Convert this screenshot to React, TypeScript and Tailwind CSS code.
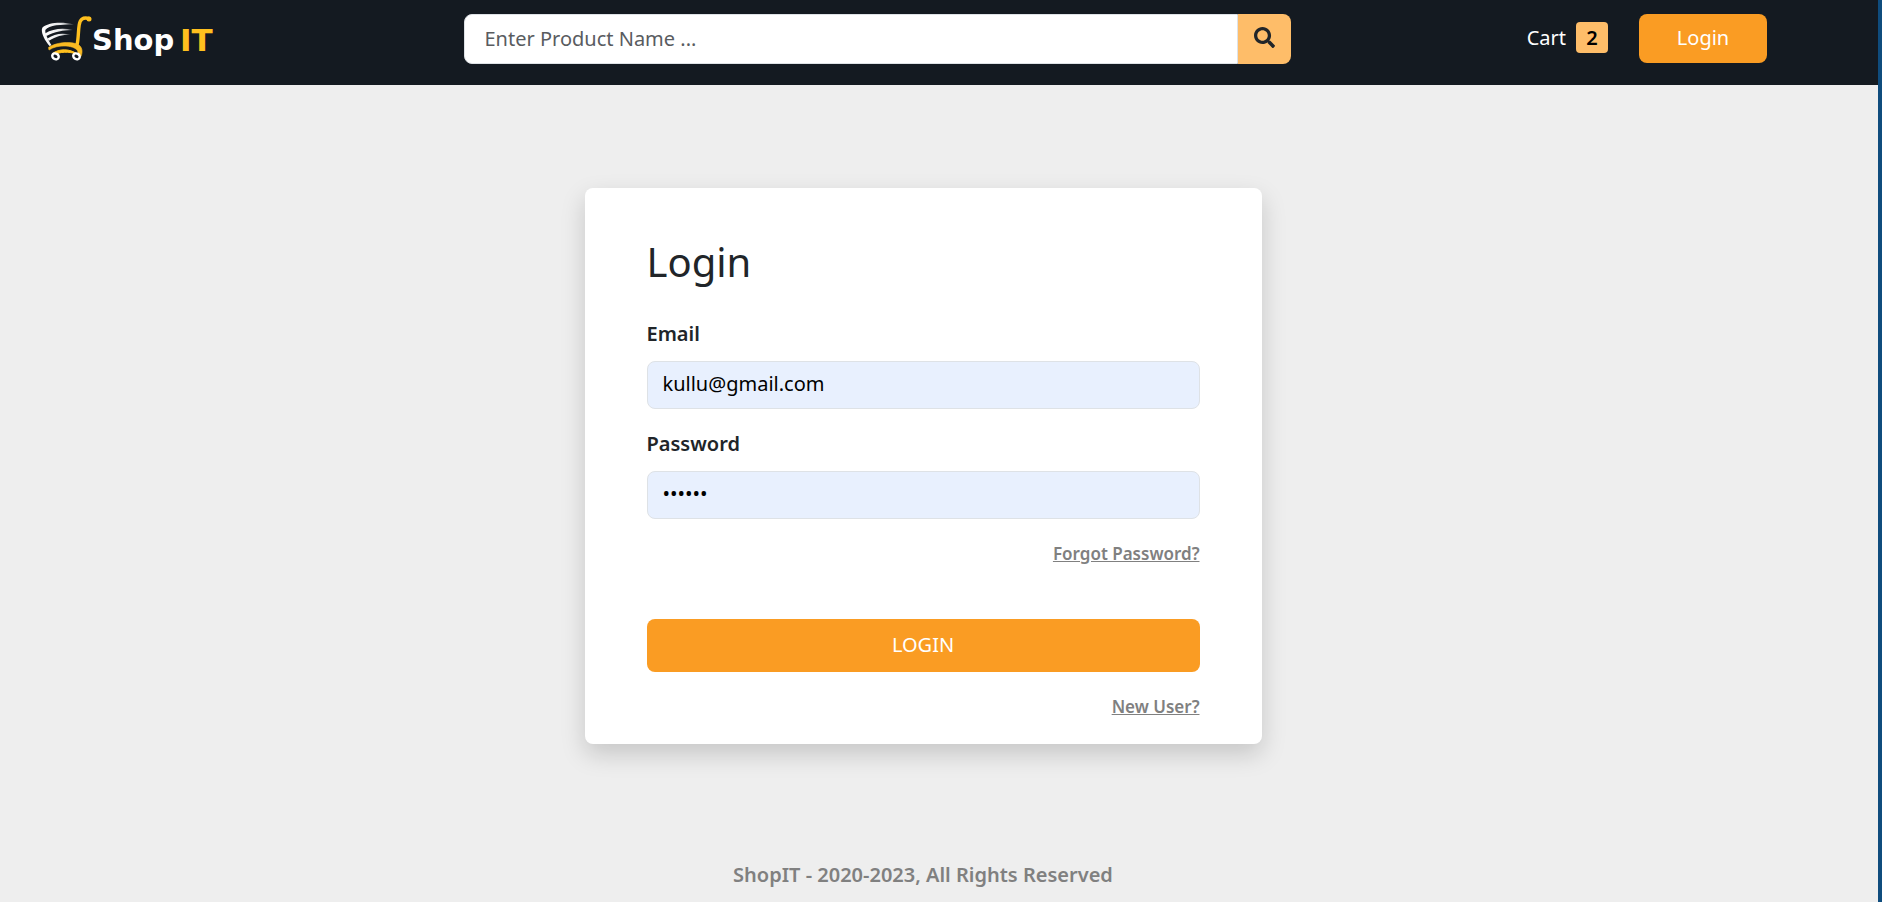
import React from "react";
import { FaSearch } from "react-icons/fa";

function Logo() {
  return (
    <svg viewBox="0 0 176 50" className="h-[50px] w-[176px]" role="img" aria-label="ShopIT">
      <defs>
        <linearGradient id="wire" x1="0" x2="1" y1="0" y2="0">
          <stop offset="0" stopColor="#fff" />
          <stop offset="0.6" stopColor="#e4e6e8" />
          <stop offset="1" stopColor="#fff" stopOpacity="0.25" />
        </linearGradient>
      </defs>
      <path d="M33 10.500C22 7.500 8 8 2 13C-0.800 15.600 1.500 24 8.500 32L10.500 31.300C6 24 3.500 18 4.500 15.800C8 11 20 10.500 33 10.500Z" fill="url(#wire)" />
      <path d="M4 19.500C12 14.800 21 13.700 32 16C22 16.200 13.500 17.500 5.500 22Z" fill="url(#wire)" />
      <path d="M6.500 24.500C13 20 20 18.700 29.500 20.500C21 21 15 22.200 8 26.800Z" fill="url(#wire)" />
      <path d="M48 4.500C41.500 2.800 39 5.800 38.200 11C37.200 17 37.500 25 36 31" fill="none" stroke="#ffc01e" strokeWidth="3.400" strokeLinecap="round" />
      <circle cx="48" cy="5" r="2.500" fill="#ffc01e" />
      <path d="M7.500 33.500C15 28.200 28 27.500 35.500 29.800C41.500 32 42 37.500 40 42.500L37 40C38 34.500 31 32.500 25 32C18.500 31.600 12.500 33 8 36Z" fill="#f9ba22" stroke="#f9ba22" strokeWidth="0.600" />
      <path d="M11.500 39.500C18 34.500 29 34.500 36 40C28 37.500 19 37.500 12.500 41Z" fill="#ffc01e" stroke="#ffc01e" />
      <ellipse cx="14.500" cy="42.300" rx="3.400" ry="2.800" fill="#141a21" stroke="#fff" strokeWidth="2.400" transform="rotate(30 14.500 42.300)" />
      <ellipse cx="35.500" cy="42.300" rx="3.400" ry="2.800" fill="#141a21" stroke="#fff" strokeWidth="2.400" transform="rotate(30 35.500 42.300)" />
      <text x="51" y="36" fontFamily="DejaVu Sans, sans-serif" fontWeight="700" fontSize="29" fill="#fff">Shop</text>
      <text x="139" y="37" fontFamily="DejaVu Sans, sans-serif" fontWeight="700" fontSize="31" fill="#ffc01e">IT</text>
    </svg>
  );
}

function Header() {
  return (
    <header className="flex h-[85px] items-start bg-[#141a21] pt-3.5 pr-8">
      <div className="w-1/4 pl-[41px]">
        <a href="#" className="inline-block">
          <Logo />
        </a>
      </div>
      <form className="ml-0.5 flex h-[50px] w-[45%] pr-[3px]" role="search" onSubmit={(e) => e.preventDefault()}>
        <input
          type="text"
          aria-label="Product name"
          placeholder="Enter Product Name ..."
          className="min-w-0 flex-1 rounded-l-lg border border-[#dee2e6] bg-white px-5 text-xl text-[#212529] outline-none placeholder:text-[#595c5f]"
        />
        <button type="submit" aria-label="Search" className="flex w-[53px] items-center justify-center rounded-r-lg bg-[#febd69] pb-1 text-[#212529]">
          <FaSearch className="size-[21px]" />
        </button>
      </form>
      <div className="flex flex-1 items-start justify-end pr-[79px] text-xl text-white">
        <a href="#" className="mr-[31px] flex h-[47px] items-center gap-2.5">
          <span>Cart</span>
          <span className="flex h-[31px] w-8 items-center justify-center rounded bg-[#febd69] font-semibold text-black">2</span>
        </a>
        <button type="button" className="h-[49px] w-32 rounded-lg bg-[#fa9c23] pb-0.5">Login</button>
      </div>
    </header>
  );
}

const field = "mt-3 block h-12 w-full rounded-lg border border-[#dee2e6] bg-[#e8f0fe] px-[15px] pb-1 text-xl text-black outline-none";
const link = "block w-fit ml-auto text-[17px] leading-[30px] font-semibold text-[#808080] underline";

function LoginCard() {
  return (
    <form
      className="w-full max-w-[677px] rounded-lg bg-white px-[62px] pt-[49px] pb-[22px] shadow-[0_10px_24px_rgba(0,0,0,0.17)]"
      onSubmit={(e) => e.preventDefault()}
    >
      <h1 className="text-[40px] leading-[50px] text-[#212529]">Login</h1>
      <div className="mt-8">
        <label htmlFor="email" className="block text-xl leading-[30px] font-semibold text-[#212529]">Email</label>
        <input id="email" type="email" defaultValue="kullu@gmail.com" className={field} />
      </div>
      <div className="mt-5">
        <label htmlFor="password" className="block text-xl leading-[30px] font-semibold text-[#212529]">Password</label>
        <input id="password" type="password" defaultValue="secret" className={field} />
      </div>
      <a href="#" className={`${link} mt-5`}>Forgot Password?</a>
      <button type="submit" className="mt-[50px] mb-5 block h-[53px] w-full rounded-lg bg-[#fa9c23] pb-0.5 text-xl text-white">LOGIN</button>
      <a href="#" className={link}>New User?</a>
    </form>
  );
}

export default function App() {
  return (
    <div className="min-h-screen bg-[#0f4c7d] pr-1 font-['Noto_Sans',sans-serif]">
      <div className="flex min-h-screen flex-col bg-[#eeeeee]">
        <Header />
        <main className="flex justify-center pt-[103px] pr-8">
          <LoginCard />
        </main>
        <footer className="mt-auto pr-8 pb-3 text-center text-xl leading-[30px] font-semibold text-[#808080]">
          ShopIT - 2020-2023, All Rights Reserved
        </footer>
      </div>
    </div>
  );
}
